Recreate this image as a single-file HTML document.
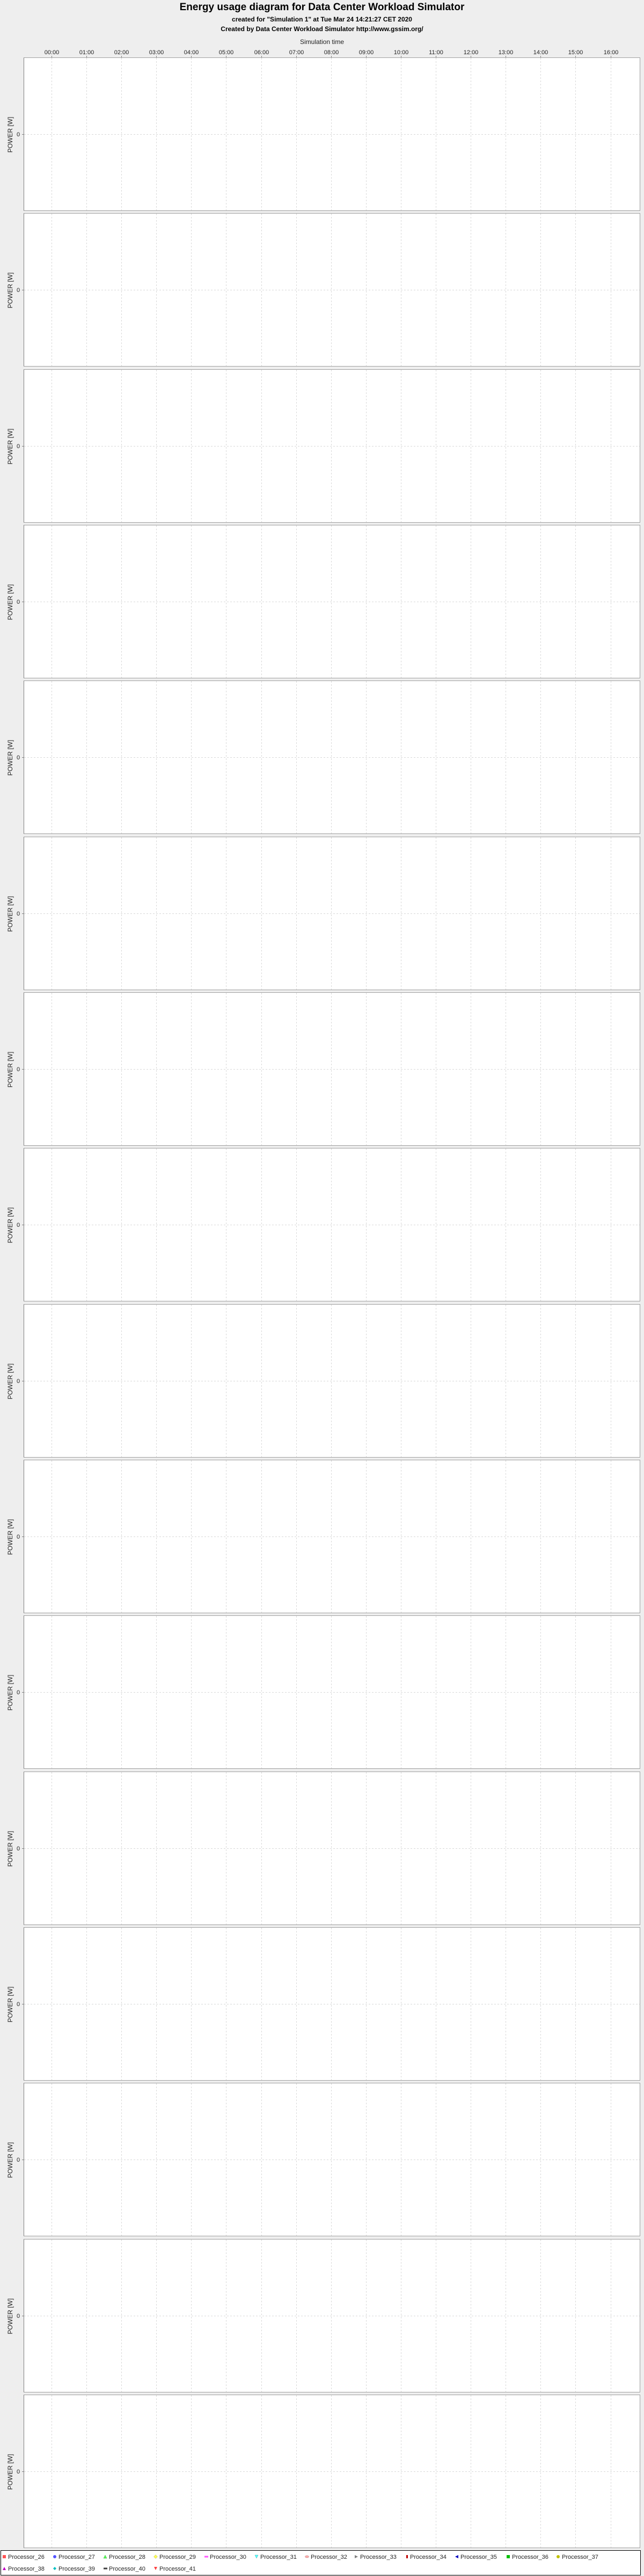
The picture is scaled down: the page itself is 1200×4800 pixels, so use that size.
<!DOCTYPE html>
<html><head><meta charset="utf-8"><style>
html,body{margin:0;padding:0;background:#eeeeee;}
svg{display:block;}
text{font-family:"Liberation Sans",sans-serif;}
</style></head><body>
<svg xmlns="http://www.w3.org/2000/svg" width="1200" height="4800" viewBox="0 0 1200 4800">
<defs>
<g id="plot">
<rect x="44.5" y="0.5" width="1148" height="285" fill="#fff" stroke="#a0a0a0" stroke-width="1"/>
<line x1="44.5" y1="0.5" x2="44.5" y2="285.5" stroke="#808080"/>
<g stroke="#d8d8d8" stroke-width="1" stroke-dasharray="3,3">
<line x1="96.5" y1="1" x2="96.5" y2="285"/><line x1="161.5" y1="1" x2="161.5" y2="285"/>
<line x1="226.5" y1="1" x2="226.5" y2="285"/><line x1="291.5" y1="1" x2="291.5" y2="285"/>
<line x1="356.5" y1="1" x2="356.5" y2="285"/><line x1="421.5" y1="1" x2="421.5" y2="285"/>
<line x1="487.5" y1="1" x2="487.5" y2="285"/><line x1="552.5" y1="1" x2="552.5" y2="285"/>
<line x1="617.5" y1="1" x2="617.5" y2="285"/><line x1="682.5" y1="1" x2="682.5" y2="285"/>
<line x1="747.5" y1="1" x2="747.5" y2="285"/><line x1="812.5" y1="1" x2="812.5" y2="285"/>
<line x1="877.5" y1="1" x2="877.5" y2="285"/><line x1="942.5" y1="1" x2="942.5" y2="285"/>
<line x1="1007.5" y1="1" x2="1007.5" y2="285"/><line x1="1072.5" y1="1" x2="1072.5" y2="285"/>
<line x1="1138.5" y1="1" x2="1138.5" y2="285"/>
<line x1="45" y1="143.5" x2="1192" y2="143.5"/>
</g>
<line x1="41" y1="143.5" x2="44" y2="143.5" stroke="#808080"/>
</g>
</defs>

<text x="600" y="19" font-size="19" font-weight="bold" text-anchor="middle" fill="#000">Energy usage diagram for Data Center Workload Simulator</text>
<text x="600" y="40" font-size="12" font-weight="bold" text-anchor="middle" fill="#000">created for "Simulation 1" at Tue Mar 24 14:21:27 CET 2020</text>
<text x="600" y="58" font-size="12" font-weight="bold" text-anchor="middle" fill="#000">Created by Data Center Workload Simulator http://www.gssim.org/</text>
<text x="600" y="82" font-size="12" text-anchor="middle" fill="#222">Simulation time</text>

<g font-size="11" fill="#222" text-anchor="middle">
<text x="96.5" y="101">00:00</text><text x="161.5" y="101">01:00</text><text x="226.5" y="101">02:00</text>
<text x="291.5" y="101">03:00</text><text x="356.5" y="101">04:00</text><text x="421.5" y="101">05:00</text>
<text x="487.5" y="101">06:00</text><text x="552.5" y="101">07:00</text><text x="617.5" y="101">08:00</text>
<text x="682.5" y="101">09:00</text><text x="747.5" y="101">10:00</text><text x="812.5" y="101">11:00</text>
<text x="877.5" y="101">12:00</text><text x="942.5" y="101">13:00</text><text x="1007.5" y="101">14:00</text>
<text x="1072.5" y="101">15:00</text><text x="1138.5" y="101">16:00</text>
</g>
<g stroke="#808080">
<line x1="96.5" y1="104" x2="96.5" y2="107"/><line x1="161.5" y1="104" x2="161.5" y2="107"/>
<line x1="226.5" y1="104" x2="226.5" y2="107"/><line x1="291.5" y1="104" x2="291.5" y2="107"/>
<line x1="356.5" y1="104" x2="356.5" y2="107"/><line x1="421.5" y1="104" x2="421.5" y2="107"/>
<line x1="487.5" y1="104" x2="487.5" y2="107"/><line x1="552.5" y1="104" x2="552.5" y2="107"/>
<line x1="617.5" y1="104" x2="617.5" y2="107"/><line x1="682.5" y1="104" x2="682.5" y2="107"/>
<line x1="747.5" y1="104" x2="747.5" y2="107"/><line x1="812.5" y1="104" x2="812.5" y2="107"/>
<line x1="877.5" y1="104" x2="877.5" y2="107"/><line x1="942.5" y1="104" x2="942.5" y2="107"/>
<line x1="1007.5" y1="104" x2="1007.5" y2="107"/><line x1="1072.5" y1="104" x2="1072.5" y2="107"/>
<line x1="1138.5" y1="104" x2="1138.5" y2="107"/>
</g>

<use href="#plot" y="107"/><use href="#plot" y="397"/><use href="#plot" y="688"/><use href="#plot" y="978"/>
<use href="#plot" y="1268"/><use href="#plot" y="1559"/><use href="#plot" y="1849"/><use href="#plot" y="2139"/>
<use href="#plot" y="2430"/><use href="#plot" y="2720"/><use href="#plot" y="3010"/><use href="#plot" y="3301"/>
<use href="#plot" y="3591"/><use href="#plot" y="3881"/><use href="#plot" y="4172"/><use href="#plot" y="4462"/>

<g font-size="11" fill="#222">
<text x="31" y="254">0</text><text x="31" y="544">0</text><text x="31" y="835">0</text><text x="31" y="1125">0</text>
<text x="31" y="1415">0</text><text x="31" y="1706">0</text><text x="31" y="1996">0</text><text x="31" y="2286">0</text>
<text x="31" y="2577">0</text><text x="31" y="2867">0</text><text x="31" y="3157">0</text><text x="31" y="3448">0</text>
<text x="31" y="3738">0</text><text x="31" y="4028">0</text><text x="31" y="4319">0</text><text x="31" y="4609">0</text>
</g>
<g font-size="12" fill="#222" text-anchor="middle">
<text transform="translate(23,251) rotate(-90)">POWER [W]</text>
<text transform="translate(23,541) rotate(-90)">POWER [W]</text>
<text transform="translate(23,832) rotate(-90)">POWER [W]</text>
<text transform="translate(23,1122) rotate(-90)">POWER [W]</text>
<text transform="translate(23,1412) rotate(-90)">POWER [W]</text>
<text transform="translate(23,1703) rotate(-90)">POWER [W]</text>
<text transform="translate(23,1993) rotate(-90)">POWER [W]</text>
<text transform="translate(23,2283) rotate(-90)">POWER [W]</text>
<text transform="translate(23,2574) rotate(-90)">POWER [W]</text>
<text transform="translate(23,2864) rotate(-90)">POWER [W]</text>
<text transform="translate(23,3154) rotate(-90)">POWER [W]</text>
<text transform="translate(23,3445) rotate(-90)">POWER [W]</text>
<text transform="translate(23,3735) rotate(-90)">POWER [W]</text>
<text transform="translate(23,4025) rotate(-90)">POWER [W]</text>
<text transform="translate(23,4316) rotate(-90)">POWER [W]</text>
<text transform="translate(23,4606) rotate(-90)">POWER [W]</text>
</g>

<rect x="1.5" y="4752.5" width="1192" height="46" fill="#fff" stroke="#000"/>
<g font-size="11" fill="#222">
<rect x="5" y="4761" width="6" height="6" fill="#ff5555"/><text x="15" y="4768">Processor_26</text>
<circle cx="102" cy="4764" r="3" fill="#5555ff"/><text x="109" y="4768">Processor_27</text>
<polygon points="193,4767 196,4761 199,4767" fill="#55ff55" stroke="#4a4" stroke-width="0.5"/><text x="203" y="4768">Processor_28</text>
<polygon points="290,4760.5 293.5,4764 290,4767.5 286.5,4764" fill="#ffff55" stroke="#aa4" stroke-width="0.5"/><text x="297" y="4768">Processor_29</text>
<rect x="381" y="4762.5" width="7" height="3" fill="#ff55ff"/><text x="391" y="4768">Processor_30</text>
<polygon points="475,4761 481,4761 478,4767" fill="#55ffff" stroke="#4aa" stroke-width="0.5"/><text x="485" y="4768">Processor_31</text>
<ellipse cx="572" cy="4764" rx="3.5" ry="2" fill="#ffafaf" stroke="#a66" stroke-width="0.5"/><text x="579" y="4768">Processor_32</text>
<polygon points="661,4761 667,4764 661,4767" fill="#808080"/><text x="671" y="4768">Processor_33</text>
<rect x="757" y="4761" width="3" height="6" fill="#c00000"/><text x="764" y="4768">Processor_34</text>
<polygon points="854,4761 848,4764 854,4767" fill="#0000c0"/><text x="858" y="4768">Processor_35</text>
<rect x="944" y="4761" width="6" height="6" fill="#00c000"/><text x="954" y="4768">Processor_36</text>
<circle cx="1040" cy="4764" r="3" fill="#c0c000"/><text x="1047" y="4768">Processor_37</text>

<polygon points="5,4789 8,4783 11,4789" fill="#c000c0"/><text x="15" y="4790">Processor_38</text>
<polygon points="102,4783 105,4786 102,4789 99,4786" fill="#00c0c0"/><text x="109" y="4790">Processor_39</text>
<rect x="193" y="4784.5" width="7" height="3" fill="#404040"/><text x="203" y="4790">Processor_40</text>
<polygon points="287,4783 293,4783 290,4789" fill="#ff4040"/><text x="297" y="4790">Processor_41</text>
</g>
</svg>
</body></html>
